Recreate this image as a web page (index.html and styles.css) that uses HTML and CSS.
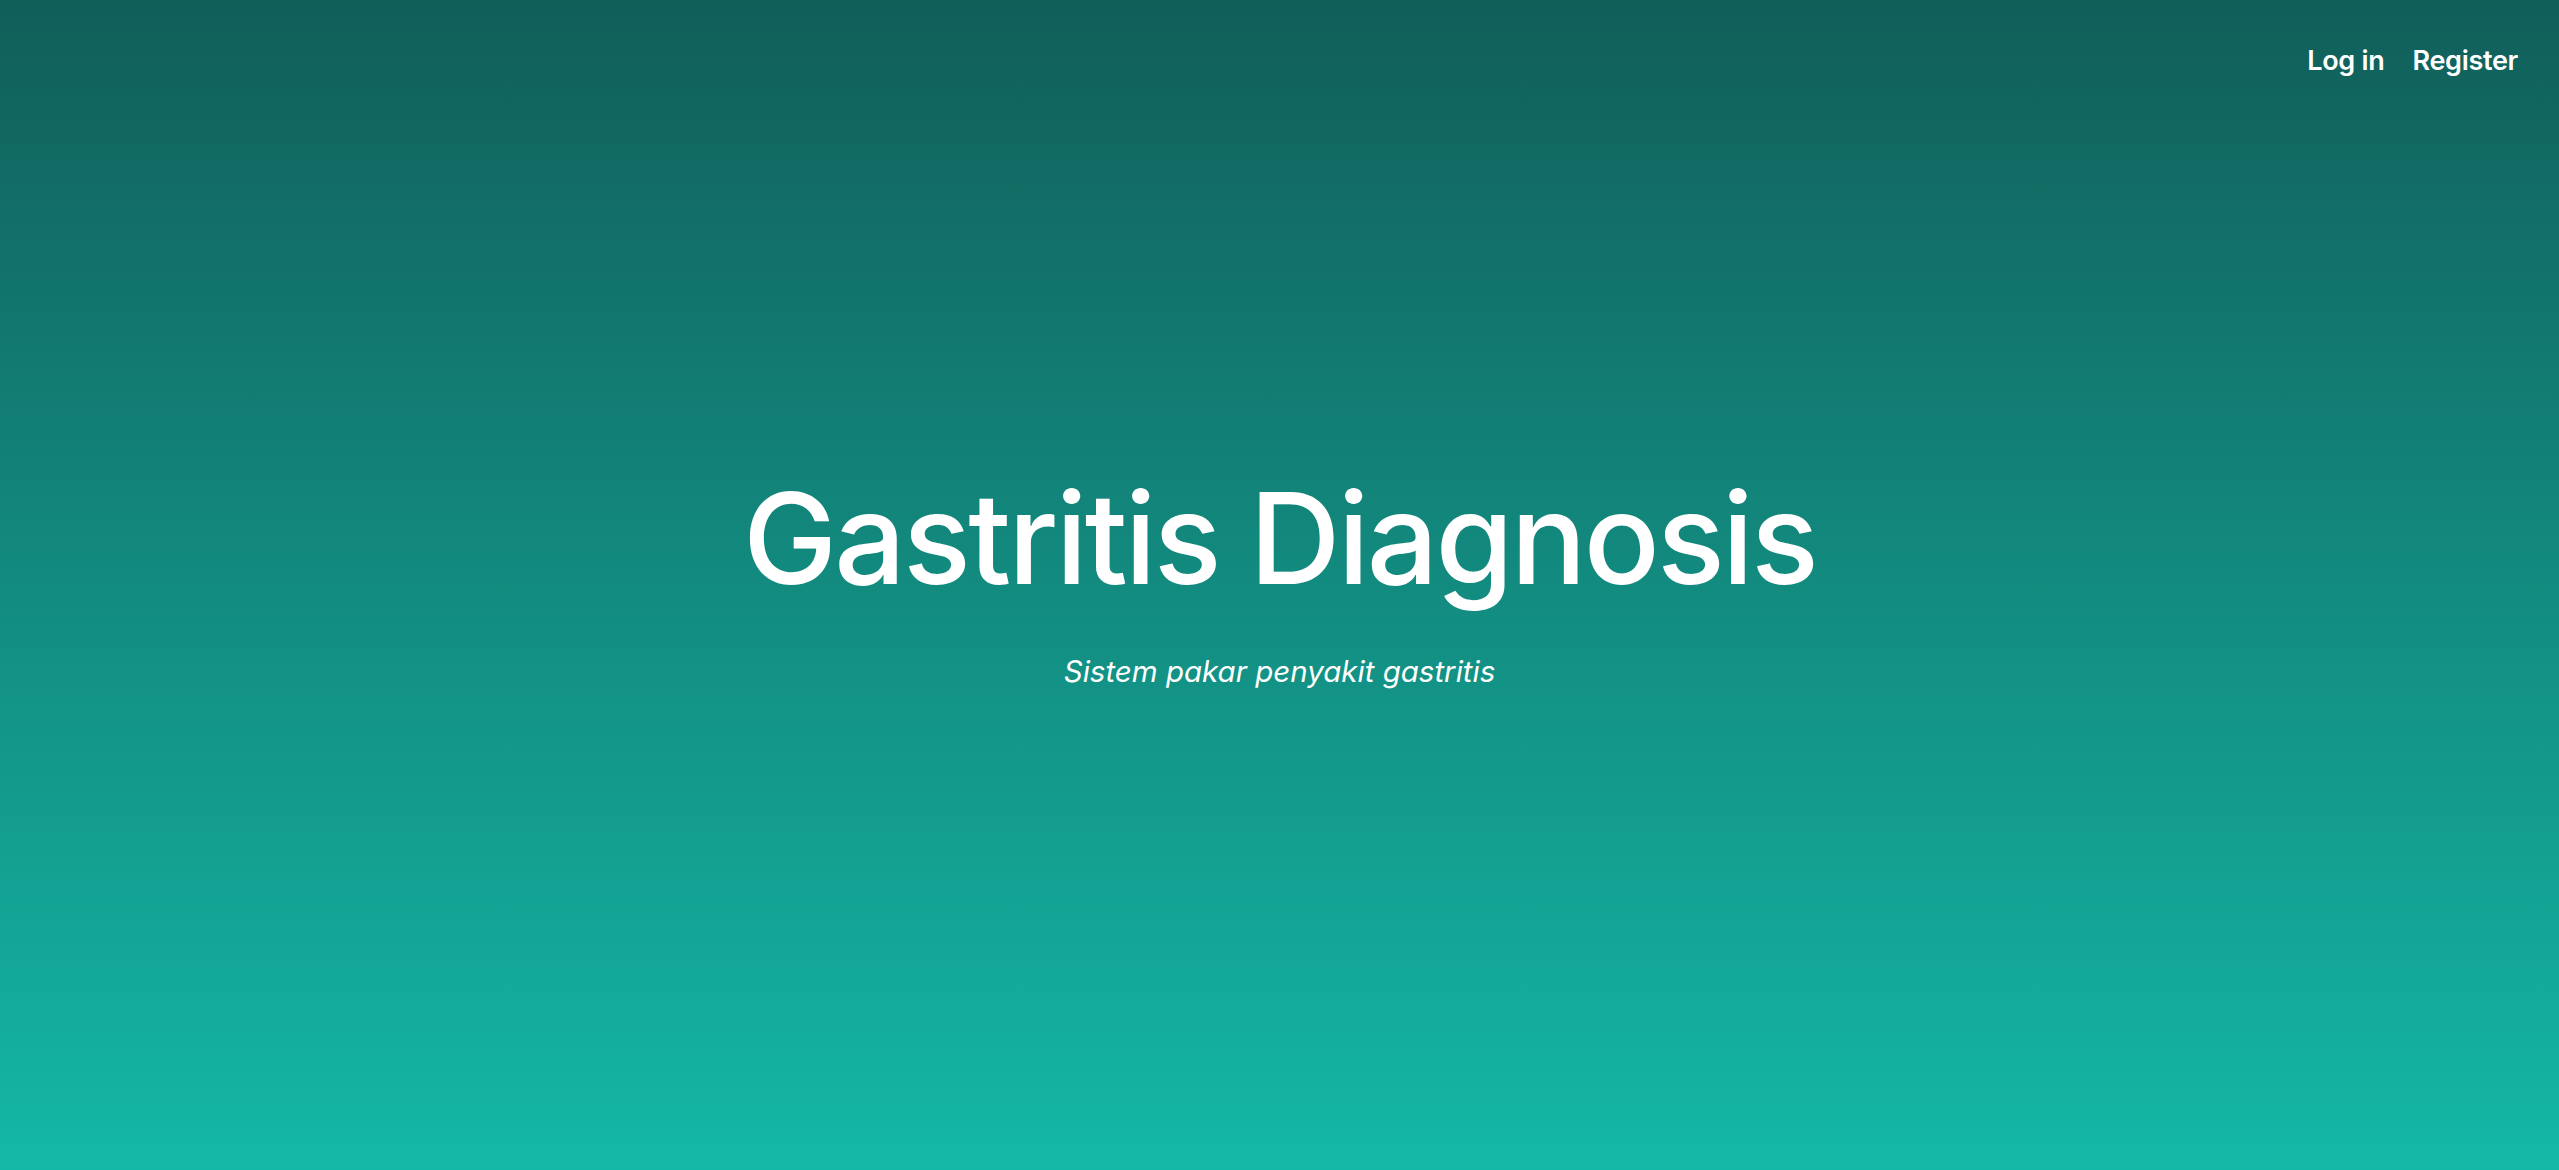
FILE: index.html
```html
<!DOCTYPE html>
<html lang="id">
<head>
<meta charset="utf-8">
<title>Gastritis Diagnosis</title>
<link rel="stylesheet" href="styles.css">
</head>
<body>
<div class="page">
  <header class="nav">
    <a class="nav-link" href="#">Log in</a>
    <a class="nav-link" href="#">Register</a>
  </header>
  <main class="hero">
    <h1 class="title">Gastritis Diagnosis</h1>
    <p class="subtitle">Sistem pakar penyakit gastritis</p>
  </main>
</div>
</body>
</html>
```
FILE: styles.css
```css
* { box-sizing: border-box; }
html, body { margin: 0; padding: 0; }
body {
  font-family: "Inter", "Lato", sans-serif;
  color: #ffffff;
}
.page {
  min-height: 100vh;
  display: flex;
  flex-direction: column;
  background: linear-gradient(to bottom, #115e59, #14b8a6);
}
.nav {
  display: flex;
  justify-content: flex-end;
  gap: 28px;
  padding: 43px 41px 0 0;
}
.nav-link {
  color: #ffffff;
  text-decoration: none;
  font-weight: 600;
  font-size: 27px;
  line-height: 36px;
  letter-spacing: -0.3px;
}
.hero {
  display: flex;
  flex-direction: column;
  align-items: center;
  padding-top: 396px;
}
.title {
  margin: 0;
  font-size: 126px;
  font-weight: 500;
  line-height: 126px;
  letter-spacing: -2.8px;
}
.subtitle {
  margin: 50px 0 0 0;
  font-size: 29.5px;
  line-height: 40px;
  font-style: italic;
}
```
